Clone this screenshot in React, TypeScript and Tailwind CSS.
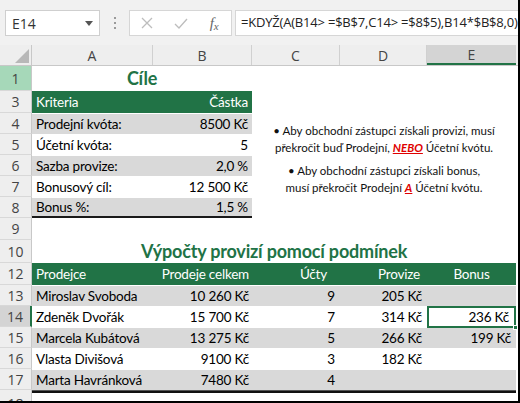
import React from 'react'

const cellFont = "font-['Lato',sans-serif] tracking-[-0.2px] whitespace-nowrap"

function RowHead({ n, h, active, green, last }: { n: string; h: string; active?: boolean; green?: boolean; last?: boolean }) {
  return (
    <div
      className={`w-[32px] ${h} shrink-0 flex items-center justify-center text-[14px] tracking-normal text-[#444] font-['Open_Sans',sans-serif] border-r border-[#c8c8c8] ${last ? '' : 'border-b border-b-[#d8d8d8]'} ${
        green ? 'bg-[#a6d8b9]' : active ? 'bg-[#d4d4d4] border-r-2 border-r-[#217346]' : 'bg-[#eeeeee]'
      }`}
    >
      {n}
    </div>
  )
}

type Goal = { label: string; value: string; band: boolean }
const GOALS: Goal[] = [
  { label: 'Prodejní kvóta:', value: '8500 Kč', band: true },
  { label: 'Účetní kvóta:', value: '5', band: false },
  { label: 'Sazba provize:', value: '2,0 %', band: true },
  { label: 'Bonusový cíl:', value: '12 500 Kč', band: false },
  { label: 'Bonus %:', value: '1,5 %', band: true },
]

type Sale = { n: string; name: string; total: string; acc: string; prov: string; bonus: string; band: boolean }
const SALES: Sale[] = [
  { n: '13', name: 'Miroslav Svoboda', total: '10 260 Kč', acc: '9', prov: '205 Kč', bonus: '', band: true },
  { n: '14', name: 'Zdeněk Dvořák', total: '15 700 Kč', acc: '7', prov: '314 Kč', bonus: '236 Kč', band: false },
  { n: '15', name: 'Marcela Kubátová', total: '13 275 Kč', acc: '5', prov: '266 Kč', bonus: '199 Kč', band: true },
  { n: '16', name: 'Vlasta Divišová', total: '9100 Kč', acc: '3', prov: '182 Kč', bonus: '', band: false },
  { n: '17', name: 'Marta Havránková', total: '7480 Kč', acc: '4', prov: '', bonus: '', band: true },
]

export default function App() {
  return (
    <div className="w-[520px] h-[403px] overflow-hidden bg-white border-r-2 border-b-2 border-black flex flex-col">
      {/* Formula bar */}
      <div className="h-[45px] shrink-0 bg-[#f1f1f1] flex items-start pt-[10px] pl-[5px] font-['Open_Sans',sans-serif]">
        <div className="w-[95px] h-[26px] bg-white border border-[#cfcfcf] flex items-center justify-between pl-[6px] pr-[6px] text-[14px] text-[#333]">
          <span>E14</span>
          <svg width="8" height="5" viewBox="0 0 8 5"><path d="M0 0h8L4 5z" fill="#555" /></svg>
        </div>
        <div className="w-[29px] h-[26px] flex items-center justify-center">
          <div className="flex flex-col gap-[3px]">
            <div className="w-[2px] h-[2px] bg-[#9a9a9a]" />
            <div className="w-[2px] h-[2px] bg-[#9a9a9a]" />
            <div className="w-[2px] h-[2px] bg-[#9a9a9a]" />
          </div>
        </div>
        <div className="w-[103px] h-[26px] bg-white border border-[#d6d6d6] flex items-center">
          <div className="w-[34px] flex justify-center">
            <svg width="12" height="12" viewBox="0 0 12 12"><path d="M1 1l10 10M11 1L1 11" stroke="#bdbdbd" strokeWidth="1.3" /></svg>
          </div>
          <div className="w-[34px] flex justify-center">
            <svg width="14" height="11" viewBox="0 0 14 11"><path d="M1 6l4 4 8-9" stroke="#bdbdbd" strokeWidth="1.3" fill="none" /></svg>
          </div>
          <div className="w-[34px] flex justify-center font-['Liberation_Serif',serif] italic text-[15px] text-[#666]">
            f<span className="text-[11px] self-end">x</span>
          </div>
        </div>
        <div className="flex-1 ml-[3px] h-[26px] bg-white border border-r-0 border-[#d6d6d6] flex items-center pl-[5px] text-[13px] tracking-[-0.2px] text-[#222] whitespace-nowrap overflow-hidden">
          =KDYŽ(A(B14&gt; =$B$7,C14&gt; =$8$5),B14*$B$8,0)
        </div>
      </div>

      {/* Column headers */}
      <div className="h-[21px] shrink-0 flex bg-[#eeeeee] text-[14px] text-[#444] font-['Open_Sans',sans-serif] border-b border-[#c8c8c8]">
        <div className="w-[32px] border-r border-[#c8c8c8] flex items-end justify-end pr-[2px] pb-[2px]">
          <svg width="14" height="14" viewBox="0 0 14 14"><path d="M14 0V14H0z" fill="#b8b8b8" /></svg>
        </div>
        <div className="w-[121px] border-r border-[#d0d0d0] flex items-center justify-center">A</div>
        <div className="w-[99px] border-r border-[#d0d0d0] flex items-center justify-center">B</div>
        <div className="w-[88px] border-r border-[#d0d0d0] flex items-center justify-center">C</div>
        <div className="w-[87px] border-r border-[#d0d0d0] flex items-center justify-center">D</div>
        <div className="w-[89px] bg-[#d4d4d4] border-b-2 border-[#217346] flex items-center justify-center">E</div>
      </div>

      {/* Goals section */}
      <div className={`flex shrink-0 ${cellFont} text-[13.5px] text-black`}>
        <div className="flex flex-col">
          <div className="flex h-[25px]">
            <RowHead n="1" h="h-[25px]" green />
            <div className="w-[220px] flex items-center justify-center font-bold text-[18px] text-[#217346]">Cíle</div>
          </div>
          <div className="flex h-[22px]">
            <RowHead n="3" h="h-[22px]" />
            <div className="w-[220px] bg-[#217346] text-white flex items-center justify-between px-[4px]">
              <span>Kriteria</span>
              <span>Částka</span>
            </div>
          </div>
          {GOALS.map((g, i) => (
            <div key={i} className="flex h-[21px]">
              <RowHead n={String(i + 4)} h="h-[21px]" />
              <div
                className={`w-[220px] flex items-center justify-between px-[4px] border-t border-white ${g.band ? 'bg-[#d9d9d9]' : 'bg-white'} ${
                  i === 4 ? 'border-b-2 border-b-[#1a1a1a]' : ''
                }`}
              >
                <span>{g.label}</span>
                <span>{g.value}</span>
              </div>
            </div>
          ))}
        </div>
        <div className="w-[264px] flex flex-col items-center pt-[56px] gap-[6px] text-[11.5px] tracking-normal leading-[17px] text-center text-[#111]">
          <p>
            • Aby obchodní zástupci získali provizi, musí
            <br />
            překročit buď Prodejní, <span className="text-[#e00000] font-bold italic underline">NEBO</span> Účetní kvótu.
          </p>
          <p>
            • Aby obchodní zástupci získali bonus,
            <br />
            musí překročit Prodejní <span className="text-[#e00000] font-bold italic underline">A</span> Účetní kvótu.
          </p>
        </div>
      </div>

      {/* Row 9 */}
      <div className="flex h-[22px] shrink-0">
        <RowHead n="9" h="h-[22px]" />
      </div>

      {/* Row 10 title */}
      <div className={`flex h-[23px] shrink-0 ${cellFont}`}>
        <RowHead n="10" h="h-[23px]" />
        <div className="w-[484px] flex items-end justify-center pb-[1px] font-bold text-[18px] leading-[22px] text-[#217346]">
          Výpočty provizí pomocí podmínek
        </div>
      </div>

      {/* Row 12 header */}
      <div className={`flex h-[22px] shrink-0 ${cellFont} text-[13.5px]`}>
        <RowHead n="12" h="h-[22px]" />
        <div className="flex bg-[#217346] text-white">
          <div className="w-[121px] flex items-center pl-[4px]">Prodejce</div>
          <div className="w-[99px] flex items-center justify-end pr-[3px]">Prodeje celkem</div>
          <div className="w-[88px] flex items-center justify-end pr-[13px]">Účty</div>
          <div className="w-[87px] flex items-center justify-end pr-[7px]">Provize</div>
          <div className="w-[89px] flex items-center justify-center">Bonus</div>
        </div>
      </div>

      {/* Sales rows */}
      {SALES.map(s => (
        <div key={s.n} className={`flex h-[21px] shrink-0 ${cellFont} text-[13.5px] text-black`}>
          <RowHead n={s.n} h="h-[21px]" active={s.n === '14'} />
          <div className={`flex border-t border-white ${s.band ? 'bg-[#d9d9d9]' : 'bg-white'}`}>
            <div className="w-[121px] flex items-center pl-[4px]">{s.name}</div>
            <div className="w-[99px] flex items-center justify-end pr-[3px]">{s.total}</div>
            <div className="w-[88px] flex items-center justify-end pr-[5px]">{s.acc}</div>
            <div className="w-[87px] flex items-center justify-end pr-[5px]">{s.prov}</div>
            <div
              className={`w-[89px] flex items-center justify-end pr-[5px] relative ${
                s.n === '14' ? 'border-2 border-[#217346] mt-[-1px] h-[22px]' : ''
              }`}
            >
              {s.bonus}
              {s.n === '14' && <div className="absolute right-[-4px] bottom-[-4px] w-[5px] h-[5px] bg-[#217346] border border-white" />}
            </div>
          </div>
        </div>
      ))}
      <div className="flex h-[3px] shrink-0">
        <div className="w-[32px] bg-[#eeeeee] border-r border-[#c8c8c8]" />
        <div className="w-[484px] border-t border-[#555] border-b-2 border-b-[#111]" />
      </div>

      {/* Row 18 */}
      <div className="flex flex-1 overflow-hidden">
        <RowHead n="18" h="h-[20px]" last />
      </div>
    </div>
  )
}
